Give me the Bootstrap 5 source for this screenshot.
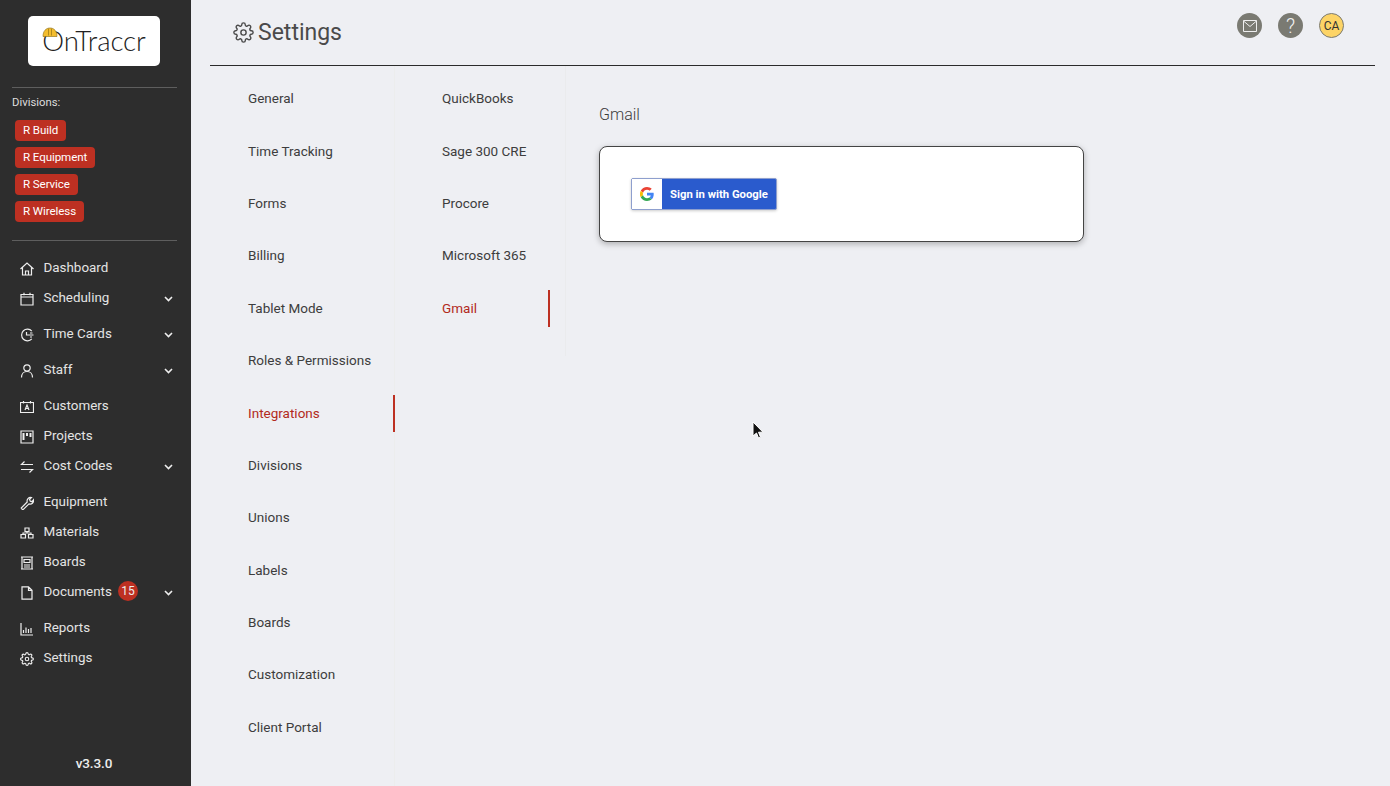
<!doctype html>
<html lang="en"><head><meta charset="utf-8"><title>Settings</title>
<link href="https://cdn.jsdelivr.net/npm/bootstrap@5.3.0/dist/css/bootstrap.min.css" rel="stylesheet">
<style>
html,body{height:100%;margin:0}
body{font-family:Roboto,"Liberation Sans",sans-serif;background:#eeeff3;color:#333;overflow:hidden}
.shell{height:786px}
.side{width:191px;flex:none;background:#2d2d2d;color:#eee;height:786px}
.logo-box{width:132px;height:50px;background:#fff;border-radius:5px;margin:16px 0 21px 28px;color:#222;position:relative;font-family:Lato,"Open Sans",sans-serif;font-size:27.6px;font-weight:300;line-height:50px;text-align:center;letter-spacing:-.1px}
.hat{position:absolute;left:14px;top:11px}
.rule{height:1px;background:#5e5e5e;margin:0 14px 0 12px}
.div-title{font-size:11.3px;color:#ddd;padding:8px 12px 0;line-height:14px}
.div-list{padding:10px 15px 18px;gap:6px;align-items:flex-start}
.div-tag{background:#bd3022;color:#fff;font-size:11.6px;line-height:21px;height:21px;border-radius:4px;padding:0 8px;letter-spacing:-.1px}
.menu{padding-top:12px}
.mitem{height:30px;padding:1px 18px 0 20px;font-size:13.4px;color:#e4e4e4;gap:9.5px;position:relative}
.mitem.more{margin-bottom:6px}
.mitem svg.ic{width:14px;height:14px;flex:none;fill:none;stroke:#eee;stroke-width:1.2}
.mitem svg.cog{stroke-width:1.9}
.chev{width:9px;height:6px;fill:none;stroke:#eee;stroke-width:1.6;margin-left:auto}
.count{position:absolute;left:118px;top:4px;width:20px;height:20px;border-radius:50%;background:#bd3022;color:#eee;font-size:12px;line-height:20px;text-align:center}
.ver{height:0;position:relative;text-align:center;font-size:13.5px;color:#eee;top:-31px;line-height:16px;font-weight:500;letter-spacing:-.1px;padding-right:3px}
.main{flex:1;min-width:0;padding-right:15px;padding-left:19px}
.topbar{height:66px;border-bottom:1px solid #2b2b2b;position:relative;padding-left:23px;padding-bottom:0}
.topbar h1{font-size:23px;font-weight:400;color:#4a4a4a;margin:0;line-height:30px}
.topbar svg.gear{width:21px;height:21px;fill:none;stroke:#4a4a4a;stroke-width:1.6;margin-right:4px}
.tools{position:absolute;right:31px;top:13px;gap:16px}
.round{width:25px;height:25px;border-radius:50%;background:#7a7a72;color:#eee}
.round.avatar{background:#fdd466;color:#333;font-size:12px;border:1px solid #7a7a72}
.round svg{width:18px;height:18px;fill:none;stroke:#eee;stroke-width:1}
.qm{font-size:20px;line-height:1;color:#f2f2f2;font-weight:300}
.col-a{width:185px;flex:none;padding-top:15px;border-right:1px solid #eceded}
.col-b{width:171px;flex:none;padding-top:15px;height:290px;border-right:1px solid #eaebed}
.sitem{height:37px;margin-bottom:15.37px;padding:0 0 2px 38px;font-size:13.5px;color:#3d3d3d;position:relative}
.col-b .sitem{padding-left:47px;margin-right:15px}
.sitem.on{color:#b22a1c}
.sitem.on::after{content:"";position:absolute;right:-1px;top:0;bottom:0;width:2px;background:#bd3022}
.col-b .sitem.on::after{right:0}
.pane{padding:38px 0 0 33px}
.pane h2{font-size:16px;font-weight:300;color:#3d3d3d;line-height:22px;margin:0 0 20px}
.gcard{width:485px;height:96px;background:#fff;border:1px solid #444;border-radius:8px;box-shadow:0 2px 6px rgba(0,0,0,.28);padding:31px}
.gbtn{width:146px;height:32px;background:#2a5bcd;border:1px solid #8e9fce;border-radius:2px;color:#fff;font-size:11.3px;font-weight:700;box-shadow:0 1px 3px rgba(0,0,0,.2);padding-top:2px}
.gmark{width:30px;height:30px;background:#fff;flex:none;margin-right:8px;margin-top:-2px}
.pointer{position:absolute;left:752px;top:421px}
</style></head>
<body>
<div class="shell d-flex">
<aside class="side d-flex flex-column">
  <div class="logo-box">OnTraccr
    <svg class="hat" width="16" height="10" viewBox="0 0 16 10"><path d="M1 9.500C1 4 4 1 8 1s7 3 7 8.500z" fill="#f3bd2f" stroke="#8a6a10" stroke-width=".6"/><path d="M6.500 1.500v7M9.500 1.500v7" stroke="#a07c18" stroke-width=".8"/></svg>
  </div>
  <div class="rule"></div>
  <div class="div-title">Divisions:</div>
  <div class="div-list d-flex flex-column">
    <span class="div-tag">R Build</span><span class="div-tag">R Equipment</span><span class="div-tag">R Service</span><span class="div-tag">R Wireless</span>
  </div>
  <div class="rule"></div>
  <nav class="menu">
    <div class="mitem d-flex align-items-center"><svg class="ic" viewBox="0 0 14 14"><path d="M.5 7 7 1l6.500 6M2.500 5.500V13h9V5.500M5.500 13V9h3v4"/></svg>Dashboard</div>
    <div class="mitem more d-flex align-items-center"><svg class="ic" viewBox="0 0 14 14"><path d="M1 2.500h12V13H1zM1 5h12M4 .8v2.500M10 .8v2.500"/></svg>Scheduling<svg class="chev" viewBox="0 0 9 6"><path d="m1 1 3.500 3.500L8 1"/></svg></div>
    <div class="mitem more d-flex align-items-center"><svg class="ic" viewBox="0 0 14 14"><path d="M11.800 3.200A5.800 5.800 0 1 0 11.800 10.800M6.500 4v3h7M10 5h2.500M10 9h2"/></svg>Time Cards<svg class="chev" viewBox="0 0 9 6"><path d="m1 1 3.500 3.500L8 1"/></svg></div>
    <div class="mitem more d-flex align-items-center"><svg class="ic" viewBox="0 0 14 14"><circle cx="7" cy="4" r="3.200"/><path d="M1.500 13.500c0-3.500 2.300-6 5.500-6s5.500 2.500 5.500 6"/></svg>Staff<svg class="chev" viewBox="0 0 9 6"><path d="m1 1 3.500 3.500L8 1"/></svg></div>
    <div class="mitem d-flex align-items-center"><svg class="ic" viewBox="0 0 14 14"><path d="M.5 2.500h13v10H.5zM3.500 1v2.500M10.500 1v2.500M5 10l2-5 2 5M5.800 8.500h2.400"/></svg>Customers</div>
    <div class="mitem d-flex align-items-center"><svg class="ic" viewBox="0 0 14 14"><path d="M1 1h12v12H1z"/><path d="M3.500 3v7M7 3v3M10.500 3v4" stroke-width="2"/></svg>Projects</div>
    <div class="mitem more d-flex align-items-center"><svg class="ic" viewBox="0 0 14 14"><path d="M4.500 1.500 1.500 4.500h11.500M9.500 12.500l3-3H1"/></svg>Cost Codes<svg class="chev" viewBox="0 0 9 6"><path d="m1 1 3.500 3.500L8 1"/></svg></div>
    <div class="mitem d-flex align-items-center"><svg class="ic" viewBox="0 0 14 14"><path d="M2 13 1.200 12l6-6C6.500 3.500 8.500 1 11.500 1.500L9.500 3.500l.8 1.700 1.700.5 1.600-2c.5 3-2 5-4.600 4.200l-6.200 6z"/></svg>Equipment</div>
    <div class="mitem d-flex align-items-center"><svg class="ic" viewBox="0 0 14 14"><path d="M5 2h4v3.500H5zM1 8.500h4.500V12H1zM8.500 8.500H13V12H8.500zM7 5.500v1.500M3 8.500V7h8v1.500"/></svg>Materials</div>
    <div class="mitem d-flex align-items-center"><svg class="ic" viewBox="0 0 14 14"><path d="M1 1h12M1 13h12M2 1v12M12 1v12M4 3.500h6v3H4zM4 9h6M4 11h6"/></svg>Boards</div>
    <div class="mitem more d-flex align-items-center"><svg class="ic" viewBox="0 0 14 14"><path d="M2 .8h6.500L12 4.300V13.200H2zM8.500.8v3.500H12"/></svg>Documents<span class="count">15</span><svg class="chev" viewBox="0 0 9 6"><path d="m1 1 3.500 3.500L8 1"/></svg></div>
    <div class="mitem d-flex align-items-center"><svg class="ic" viewBox="0 0 14 14"><path d="M1 1v12h12M3.500 11V8M6 11V5.500M8.500 11V7M11 11V6"/></svg>Reports</div>
    <div class="mitem d-flex align-items-center"><svg class="ic cog" viewBox="0 0 24 24"><circle cx="12" cy="12" r="3"/><path d="M19.400 15a1.650 1.650 0 0 0 .33 1.820l.06.06a2 2 0 0 1 0 2.830 2 2 0 0 1-2.830 0l-.06-.06a1.650 1.650 0 0 0-1.820-.33 1.650 1.650 0 0 0-1 1.510V21a2 2 0 0 1-2 2 2 2 0 0 1-2-2v-.09A1.650 1.650 0 0 0 9 19.400a1.650 1.650 0 0 0-1.820.33l-.06.06a2 2 0 0 1-2.830 0 2 2 0 0 1 0-2.830l.06-.06a1.650 1.650 0 0 0 .33-1.820 1.650 1.650 0 0 0-1.510-1H3a2 2 0 0 1-2-2 2 2 0 0 1 2-2h.09A1.650 1.650 0 0 0 4.600 9a1.650 1.650 0 0 0-.33-1.820l-.06-.06a2 2 0 0 1 0-2.830 2 2 0 0 1 2.830 0l.06.06a1.650 1.650 0 0 0 1.820.33H9a1.650 1.650 0 0 0 1-1.510V3a2 2 0 0 1 2-2 2 2 0 0 1 2 2v.09a1.650 1.650 0 0 0 1 1.510 1.650 1.650 0 0 0 1.820-.33l.06-.06a2 2 0 0 1 2.830 0 2 2 0 0 1 0 2.830l-.06.06a1.650 1.650 0 0 0-.33 1.820V9a1.650 1.650 0 0 0 1.510 1H21a2 2 0 0 1 2 2 2 2 0 0 1-2 2h-.09a1.650 1.650 0 0 0-1.510 1z"/></svg>Settings</div>
  </nav>
  <div class="flex-grow-1"></div>
  <div class="ver">v3.3.0</div>
</aside>
<main class="main d-flex flex-column">
  <header class="topbar d-flex align-items-center">
    <svg class="gear" viewBox="0 0 24 24"><circle cx="12" cy="12" r="3"/><path d="M19.400 15a1.650 1.650 0 0 0 .33 1.820l.06.06a2 2 0 0 1 0 2.830 2 2 0 0 1-2.830 0l-.06-.06a1.650 1.650 0 0 0-1.820-.33 1.650 1.650 0 0 0-1 1.510V21a2 2 0 0 1-2 2 2 2 0 0 1-2-2v-.09A1.650 1.650 0 0 0 9 19.400a1.650 1.650 0 0 0-1.820.33l-.06.06a2 2 0 0 1-2.830 0 2 2 0 0 1 0-2.830l.06-.06a1.650 1.650 0 0 0 .33-1.820 1.650 1.650 0 0 0-1.510-1H3a2 2 0 0 1-2-2 2 2 0 0 1 2-2h.09A1.650 1.650 0 0 0 4.600 9a1.650 1.650 0 0 0-.33-1.820l-.06-.06a2 2 0 0 1 0-2.830 2 2 0 0 1 2.830 0l.06.06a1.650 1.650 0 0 0 1.820.33H9a1.650 1.650 0 0 0 1-1.510V3a2 2 0 0 1 2-2 2 2 0 0 1 2 2v.09a1.650 1.650 0 0 0 1 1.510 1.650 1.650 0 0 0 1.820-.33l.06-.06a2 2 0 0 1 2.830 0 2 2 0 0 1 0 2.830l-.06.06a1.650 1.650 0 0 0-.33 1.820V9a1.650 1.650 0 0 0 1.510 1H21a2 2 0 0 1 2 2 2 2 0 0 1-2 2h-.09a1.650 1.650 0 0 0-1.510 1z"/></svg>
    <h1>Settings</h1>
    <div class="tools d-flex">
      <div class="round d-flex align-items-center justify-content-center"><svg viewBox="0 0 18 18"><path d="M2.500 3.500h13v11h-13zM2.500 4 9 9.500 15.500 4"/></svg></div>
      <div class="round d-flex align-items-center justify-content-center"><span class="qm">?</span></div>
      <div class="round avatar d-flex align-items-center justify-content-center">CA</div>
    </div>
  </header>
  <div class="d-flex flex-grow-1">
    <div class="col-a">
      <div class="sitem d-flex align-items-center">General</div>
      <div class="sitem d-flex align-items-center">Time Tracking</div>
      <div class="sitem d-flex align-items-center">Forms</div>
      <div class="sitem d-flex align-items-center">Billing</div>
      <div class="sitem d-flex align-items-center">Tablet Mode</div>
      <div class="sitem d-flex align-items-center">Roles &amp; Permissions</div>
      <div class="sitem on d-flex align-items-center">Integrations</div>
      <div class="sitem d-flex align-items-center">Divisions</div>
      <div class="sitem d-flex align-items-center">Unions</div>
      <div class="sitem d-flex align-items-center">Labels</div>
      <div class="sitem d-flex align-items-center">Boards</div>
      <div class="sitem d-flex align-items-center">Customization</div>
      <div class="sitem d-flex align-items-center">Client Portal</div>
    </div>
    <div class="col-b">
      <div class="sitem d-flex align-items-center">QuickBooks</div>
      <div class="sitem d-flex align-items-center">Sage 300 CRE</div>
      <div class="sitem d-flex align-items-center">Procore</div>
      <div class="sitem d-flex align-items-center">Microsoft 365</div>
      <div class="sitem on d-flex align-items-center">Gmail</div>
    </div>
    <section class="pane">
      <h2>Gmail</h2>
      <div class="gcard">
        <div class="gbtn d-flex align-items-center"><span class="gmark d-flex align-items-center justify-content-center">
          <svg width="14" height="14" viewBox="0 0 48 48"><path fill="#EA4335" d="M24 9.500c3.500 0 6.700 1.200 9.200 3.600l6.900-6.900C35.900 2.400 30.500 0 24 0 14.600 0 6.500 5.400 2.600 13.200l8 6.200C12.400 13.700 17.700 9.500 24 9.500z"/><path fill="#4285F4" d="M47 24.500c0-1.600-.1-3.100-.4-4.500H24v9h12.900c-.6 3-2.200 5.500-4.700 7.200l7.700 6C44.400 38 47 31.800 47 24.500z"/><path fill="#FBBC05" d="M10.500 28.600A14.500 14.500 0 0 1 10.500 19.400l-8-6.200a24 24 0 0 0 0 21.600z"/><path fill="#34A853" d="M24 48c6.500 0 11.900-2.100 15.900-5.800l-7.700-6c-2.200 1.500-4.900 2.300-8.200 2.300-6.300 0-11.600-4.200-13.500-9.900l-8 6.200C6.500 42.600 14.600 48 24 48z"/></svg>
        </span>Sign in with Google</div>
      </div>
    </section>
  </div>
</main>
</div>
<svg class="pointer" width="12" height="19" viewBox="0 0 12 19"><path d="M1 1v14l3.500-3 2 5 2-.8-2-5H11z" fill="#111" stroke="#fff" stroke-width="1"/></svg>
<script src="https://cdn.jsdelivr.net/npm/bootstrap@5.3.0/dist/js/bootstrap.bundle.min.js"></script>
</body></html>
